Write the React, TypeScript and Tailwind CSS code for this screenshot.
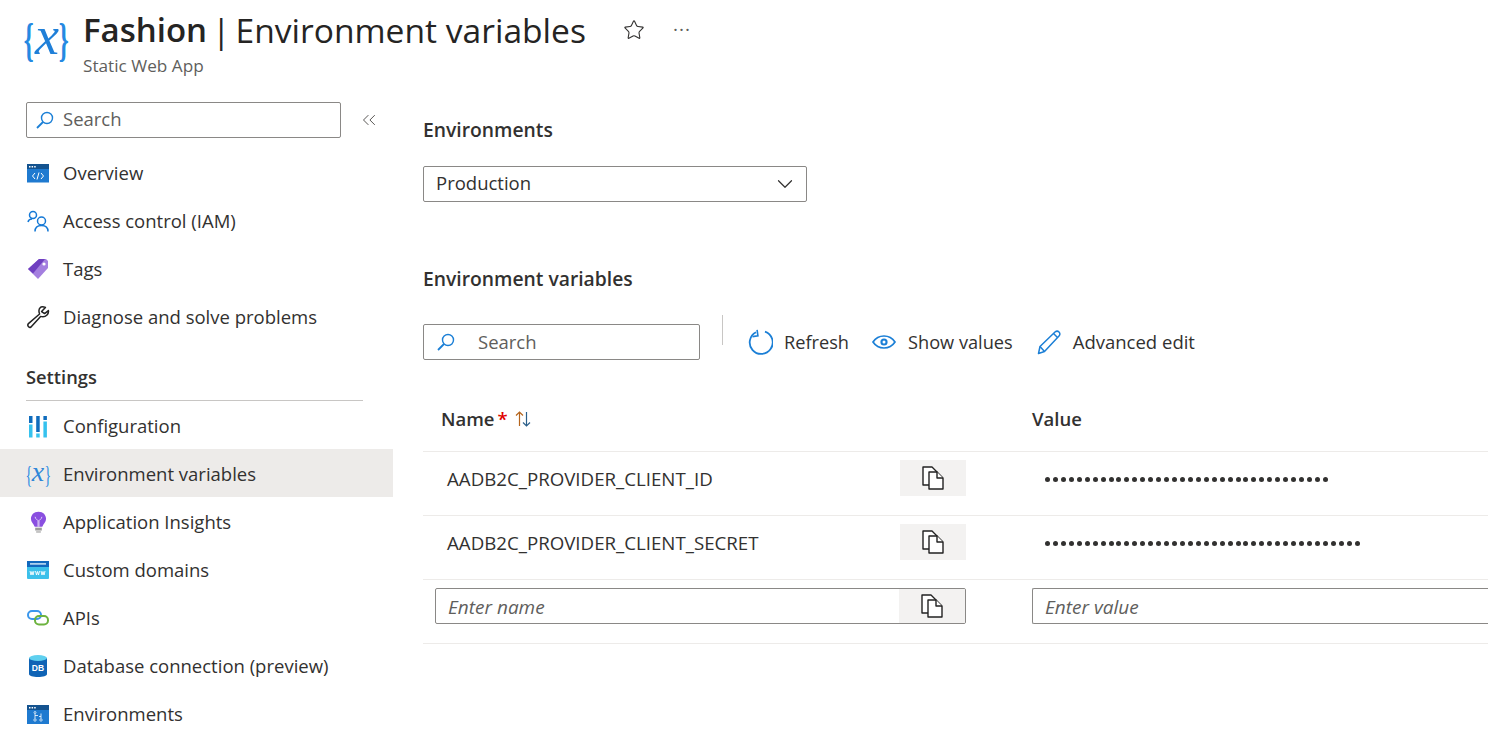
import { ChevronDown, ChevronsLeft, Star } from "lucide-react";

function SearchGlyph() {
  return (
    <svg width="20" height="20" viewBox="0 0 20 20" fill="none" stroke="#1b7fd6" strokeWidth="1.4">
      <circle cx="12" cy="8" r="5.5" />
      <path d="M8 12 L2 18" strokeWidth="1.8" />
    </svg>
  );
}

function CurlyX({ size }: { size: "lg" | "sm" }) {
  if (size === "lg") {
    return (
      <div className="flex h-[44px] w-[44px] items-center justify-between font-['Liberation_Serif',serif] text-[#2589e2] leading-none">
        <span className="w-[9px] scale-x-[0.55] text-[46px] font-bold">
          <span className="-ml-[6px] block">{"{"}</span>
        </span>
        <span className="-mt-[9px] text-[54px] italic text-[#1f7fd8]">x</span>
        <span className="w-[9px] scale-x-[0.55] text-[46px] font-bold">
          <span className="-ml-[6px] block">{"}"}</span>
        </span>
      </div>
    );
  }
  return (
    <div className="flex h-[24px] w-[24px] items-center justify-between font-['Liberation_Serif',serif] text-[#2589e2] leading-none">
      <span className="w-[5px] scale-x-[0.55] text-[25px]">
        <span className="-ml-[3px] block">{"{"}</span>
      </span>
      <span className="-mt-[5px] text-[28px] italic text-[#2f86d8]">x</span>
      <span className="w-[5px] scale-x-[0.55] text-[25px]">
        <span className="-ml-[3px] block">{"}"}</span>
      </span>
    </div>
  );
}

function OverviewIcon() {
  return (
    <svg width="22" height="19" viewBox="0 0 22 19">
      <rect x="0" y="0" width="22" height="18.5" fill="#1f7ad0" />
      <rect x="0" y="0" width="22" height="5" fill="#14538f" />
      <rect x="2" y="2" width="1.5" height="1.5" fill="#fff" />
      <rect x="4.6" y="2" width="1.5" height="1.5" fill="#fff" />
      <rect x="7.2" y="2" width="1.5" height="1.5" fill="#fff" />
      <path d="M8 9 L5.5 12 L8 15 M14 9 L16.5 12 L14 15 M12 8.5 L10 15.5" stroke="#fff" strokeWidth="1" fill="none" />
    </svg>
  );
}

function AccessIcon() {
  return (
    <svg width="22" height="22" viewBox="0 0 22 22" fill="none" stroke="#1579d6" strokeWidth="1.5">
      <circle cx="6" cy="5" r="3.5" />
      <circle cx="14.5" cy="11" r="4" />
      <path d="M1 12 C1.5 9.8 3 9 5 9 M8 21.5 C8 17 11 15.5 14.5 15.5 C18 15.5 21 17 21 21.5" />
    </svg>
  );
}

function TagIcon() {
  return (
    <svg width="22" height="22" viewBox="0 0 22 22">
      <path d="M1 11 L12 1 H19 L21 3 V10 L11 21 Z" fill="#a47fdf" />
      <path d="M1 11 L12 1 H18 L6 15.5 Z" fill="#6f3fc0" />
      <circle cx="17" cy="6" r="1.6" fill="#fff" />
    </svg>
  );
}

function WrenchIcon() {
  return (
    <svg width="24" height="24" viewBox="0 0 24 24" fill="none" stroke="#222" strokeWidth="1.5" strokeLinejoin="round">
      <path d="M15 2 L13.5 3.5 C12.6 5.5 13 7.6 13.6 9 L2.4 18.6 C1 20 2.6 23.4 5 22 L14.6 11.4 C16.4 12 19 12 21 10 C22.4 8.6 22.6 6.8 22.4 5.6 L18.6 8.6 L15.6 6.6 L19.4 2.4 C18 1.8 16.4 1.4 15 2 Z" />
    </svg>
  );
}

function ConfigIcon() {
  return (
    <svg width="18" height="23" viewBox="0 0 18 23">
      <rect x="0" y="1" width="3.5" height="7" fill="#0f6cbd" />
      <rect x="0" y="9.5" width="3.5" height="13" fill="#36c2ee" />
      <rect x="7.2" y="1" width="3.5" height="16" fill="#0f6cbd" />
      <rect x="7.2" y="18.5" width="3.5" height="4" fill="#36c2ee" />
      <rect x="14.4" y="1" width="3.5" height="4" fill="#0f6cbd" />
      <rect x="14.4" y="6.5" width="3.5" height="16" fill="#36c2ee" />
    </svg>
  );
}

function BulbIcon() {
  return (
    <svg width="17" height="23" viewBox="0 0 18 23">
      <path d="M9 0 C4 0 1 3.5 1 7.5 C1 11 3.5 12.5 5 16 H13 C14.5 12.5 17 11 17 7.5 C17 3.5 14 0 9 0 Z" fill="#8a4fe0" />
      <path d="M5.5 5.5 C5.5 8.5 8 8 8.5 9.5 V16 M12.5 5.5 C12.5 8.5 10 8 9.5 9.5 V16" stroke="#e2d5f7" strokeWidth="1" fill="none" />
      <rect x="5.5" y="17" width="7" height="3" fill="#9b9b9b" />
      <rect x="6.5" y="20.5" width="5" height="2" fill="#c4c4c4" />
    </svg>
  );
}

function DomainIcon() {
  return (
    <svg width="22" height="18" viewBox="0 0 22 18">
      <rect x="0" y="0" width="22" height="18" rx="1" fill="#3cc0ea" />
      <rect x="0" y="0" width="22" height="6" fill="#1268bd" />
      <rect x="3" y="2.2" width="16" height="1.4" fill="#d6ecfa" />
      <path d="M3 10 L4 14 L5 10.5 L6 14 L7 10 M8.5 10 L9.5 14 L10.5 10.5 L11.5 14 L12.5 10 M14 10 L15 14 L16 10.5 L17 14 L18 10" stroke="#fff" strokeWidth="0.9" fill="none" />
    </svg>
  );
}

function ApiIcon() {
  return (
    <svg width="22" height="16" viewBox="0 0 22 16" fill="none" strokeWidth="2">
      <rect x="1" y="1" width="13" height="8" rx="4" stroke="#3b97ec" />
      <rect x="8" y="6" width="13" height="8.5" rx="4" stroke="#6db33f" />
    </svg>
  );
}

function DbIcon() {
  return (
    <svg width="18" height="22" viewBox="0 0 18 22">
      <path d="M0 3 V19 C0 21 4 22 9 22 C14 22 18 21 18 19 V3 Z" fill="#0f63b5" />
      <ellipse cx="9" cy="3" rx="9" ry="3" fill="#5fd0ef" />
      <text x="9" y="16" textAnchor="middle" fontSize="8.5" fontWeight="700" fontFamily="Liberation Sans, sans-serif" fill="#fff">DB</text>
    </svg>
  );
}

function EnvsIcon() {
  return (
    <svg width="22" height="19" viewBox="0 0 22 19">
      <rect x="0" y="0" width="22" height="19" fill="#1f7ad0" />
      <rect x="0" y="0" width="22" height="5" fill="#14538f" />
      <rect x="2" y="2" width="1.5" height="1.5" fill="#fff" />
      <rect x="4.6" y="2" width="1.5" height="1.5" fill="#fff" />
      <rect x="7.2" y="2" width="1.5" height="1.5" fill="#fff" />
      <path d="M8 8.5 V13.5 M14 8.5 V13.5 M8 10.5 H11 M14 11.5 H12" stroke="#fff" strokeWidth="0.8" fill="none" />
      <circle cx="8" cy="7.5" r="1" fill="none" stroke="#fff" strokeWidth="0.7" />
      <circle cx="8" cy="15" r="1.2" fill="none" stroke="#fff" strokeWidth="0.7" />
      <circle cx="14" cy="15" r="1.2" fill="none" stroke="#fff" strokeWidth="0.7" />
    </svg>
  );
}

function RefreshGlyph() {
  return (
    <svg width="26" height="26" viewBox="0 0 26 26" fill="none" stroke="#1b7fd6" strokeWidth="1.8">
      <path d="M9 3.2 A11.5 11.5 0 1 0 18 2.6" />
      <path d="M10.5 1 V7 H5" strokeWidth="1.6" transform="rotate(-8 10 4)" />
    </svg>
  );
}

function EyeGlyph() {
  return (
    <svg width="24" height="14" viewBox="0 0 24 14" fill="none" stroke="#1b7fd6" strokeWidth="1.7">
      <path d="M1 7 C4 2.5 8 1 12 1 C16 1 20 2.5 23 7 C20 11.5 16 13 12 13 C8 13 4 11.5 1 7 Z" />
      <circle cx="12" cy="7" r="3.6" fill="#1b7fd6" stroke="none" />
      <circle cx="12" cy="7" r="1.5" fill="#fff" stroke="none" />
    </svg>
  );
}

function PencilGlyph() {
  return (
    <svg width="24" height="25" viewBox="0 0 24 25" fill="none" stroke="#1b7fd6" strokeWidth="1.5" strokeLinejoin="round">
      <path d="M1.5 23.5 L3 16.5 L18 2 C19.5 0.8 21 1 22 2 C23.2 3.2 23.2 4.8 22 6 L7.5 21.5 Z" />
      <path d="M3 16.5 L7.5 21.5 M16.5 3.5 L20.5 7.5" />
    </svg>
  );
}

function CopyGlyph() {
  return (
    <svg width="22" height="24" viewBox="0 0 22 24" fill="#fff" stroke="#222" strokeWidth="1.4" strokeLinejoin="round">
      <path d="M1 1 H10 L15 6 V19 H1 Z" />
      <path d="M7 6 H15 L21 12 V23 H7 Z" />
      <path d="M15 6 V12 H21" />
    </svg>
  );
}

function SortGlyph() {
  return (
    <svg width="16" height="18" viewBox="0 0 16 18" fill="none" strokeWidth="1.2">
      <path d="M4.5 16 V2 M1 5.5 L4.5 2 L8 5.5" stroke="#b5651d" />
      <path d="M11.5 2 V16 M8 12.5 L11.5 16 L15 12.5" stroke="#2b5f8a" />
    </svg>
  );
}

const navTop = [
  { label: "Overview", icon: <OverviewIcon /> },
  { label: "Access control (IAM)", icon: <AccessIcon /> },
  { label: "Tags", icon: <TagIcon /> },
  { label: "Diagnose and solve problems", icon: <WrenchIcon /> },
];

const navSettings = [
  { label: "Configuration", icon: <ConfigIcon /> },
  { label: "Environment variables", icon: <CurlyX size="sm" />, active: true },
  { label: "Application Insights", icon: <BulbIcon /> },
  { label: "Custom domains", icon: <DomainIcon /> },
  { label: "APIs", icon: <ApiIcon /> },
  { label: "Database connection (preview)", icon: <DbIcon /> },
  { label: "Environments", icon: <EnvsIcon /> },
];

function NavRow({ label, icon, active, low }: { label: string; icon: React.ReactNode; active?: boolean; low?: boolean }) {
  return (
    <div className={`flex h-12 shrink-0 items-center pl-[26px] ${active ? "bg-[#edebe9]" : ""}`}>
      <div className={`flex w-[24px] justify-center ${low ? "pt-[2px]" : ""}`}>{icon}</div>
      <span className={`ml-[13px] whitespace-nowrap ${low ? "pt-[2px]" : ""}`}>{label}</span>
    </div>
  );
}

const rows = [
  { name: "AADB2C_PROVIDER_CLIENT_ID", dots: 36 },
  { name: "AADB2C_PROVIDER_CLIENT_SECRET", dots: 40 },
];

export default function App() {
  return (
    <div className="flex h-[730px] w-[1488px] flex-col overflow-hidden bg-white font-['Open_Sans',sans-serif] text-[18.5px] text-[#323130]">
      {/* header */}
      <div className="flex h-[97px] shrink-0 items-start pl-[25px] pt-[11px]">
        <div className="mt-[7px]"><CurlyX size="lg" /></div>
        <div className="ml-[14px]">
          <div className="flex items-center text-[33.6px] leading-[38px] text-[#252423]">
            <span className="text-[33px] font-semibold">Fashion</span>
            <span className="mx-[5px] font-normal">|</span>
            <span>Environment variables</span>
            <Star className="ml-[37px] h-[22px] w-[22px] text-[#323130]" strokeWidth={1.2} />
            <span className="ml-[28px] -mt-[2px] text-[19px] tracking-[1px] text-[#605e5c]">···</span>
          </div>
          <div className="mt-[7px] text-[17.2px] leading-5 text-[#605e5c]">Static Web App</div>
        </div>
      </div>

      <div className="flex min-h-0 flex-1">
        {/* sidebar */}
        <div className="flex w-[393px] shrink-0 flex-col overflow-hidden pt-[5px]">
          <div className="flex shrink-0 items-center pl-[26px]">
            <div className="flex h-9 w-[315px] items-center rounded-[2px] border border-[#8a8886] pl-[8px] text-[#605e5c]">
              <SearchGlyph />
              <span className="ml-[8px] -mt-[2px]">Search</span>
            </div>
            <ChevronsLeft className="ml-[17px] h-[22px] w-[22px] text-[#484644]" strokeWidth={1} />
          </div>
          <div className="mt-[11px] flex flex-col">
            {navTop.map((n) => <NavRow key={n.label} {...n} />)}
          </div>
          <div className="ml-[26px] mr-[30px] mt-[24px] h-[36px] shrink-0 border-b border-[#c8c6c4] font-semibold leading-[24px]">
            <span className="text-[18.3px]">Settings</span>
          </div>
          <div className="flex flex-col">
            {navSettings.map((n) => <NavRow key={n.label} {...n} low />)}
          </div>
        </div>

        {/* main */}
        <div className="min-w-0 flex-1 pl-[30px]">
          <div className="mt-[20px] text-[19.3px] font-semibold leading-[26px]">Environments</div>
          <div className="mt-[23px] flex h-9 w-[384px] items-center justify-between rounded-[2px] border border-[#8a8886] pl-[12px] pr-[8px]">
            <span className="-mt-[2px]">Production</span>
            <ChevronDown className="h-[26px] w-[26px] text-[#323130]" strokeWidth={1.1} />
          </div>
          <div className="mt-[64px] text-[19.3px] font-semibold leading-[26px]">Environment variables</div>

          <div className="mt-[23px] flex items-start">
            <div className="mt-[9px] flex h-9 w-[277px] items-center rounded-[2px] border border-[#8a8886] pl-[12px] text-[#605e5c]">
              <SearchGlyph />
              <span className="ml-[22px]">Search</span>
            </div>
            <div className="ml-[22px] h-[30px] w-[1px] bg-[#c8c6c4]"></div>
            <div className="ml-[24px] mt-[14px] flex items-center">
              <RefreshGlyph />
              <span className="ml-[11px] text-[18.2px] leading-[24px]">Refresh</span>
              <span className="ml-[23px]"><EyeGlyph /></span>
              <span className="ml-[12px] text-[18.2px] leading-[24px]">Show values</span>
              <span className="ml-[24px]"><PencilGlyph /></span>
              <span className="ml-[12px] leading-[24px]">Advanced edit</span>
            </div>
          </div>

          {/* table */}
          <div className="mt-[28px]">
            <div className="flex h-[64px] items-center border-b border-[#edebe9] pb-[2px]">
              <div className="flex w-[609px] items-center pl-[18px]">
                <span className="font-semibold">Name</span>
                <span className="ml-[3px] font-semibold text-[#e00000]">*</span>
                <span className="ml-[7px]"><SortGlyph /></span>
              </div>
              <span className="font-semibold">Value</span>
            </div>
            {rows.map((r) => (
              <div key={r.name} className="flex h-[64px] items-start border-b border-[#edebe9] pt-[8px]">
                <div className="flex h-9 w-[477px] items-center whitespace-nowrap pl-[24px] pt-[2px] text-[18.7px]">{r.name}</div>
                <div className="flex h-9 w-[66px] items-center justify-center bg-[#f3f2f1]"><CopyGlyph /></div>
                <div className="ml-[79px] flex h-9 items-center gap-[2.95px] pt-[2px]">
                  {Array.from({ length: r.dots }).map((_, i) => (
                    <span key={i} className="h-[5px] w-[5px] rounded-full bg-[#323130]"></span>
                  ))}
                </div>
              </div>
            ))}
            <div className="flex h-[64px] items-start border-b border-[#edebe9] pt-[8px] text-[19px]">
              <div className="ml-[12px] flex h-9 w-[531px] items-center overflow-hidden rounded-[2px] border border-[#8a8886]">
                <span className="flex-1 pl-[12px] pt-[2px] italic text-[#605e5c]">Enter name</span>
                <div className="flex h-full w-[66px] items-center justify-center bg-[#f3f2f1]"><CopyGlyph /></div>
              </div>
              <div className="ml-[66px] flex h-9 flex-1 items-center rounded-l-[2px] border border-r-0 border-[#8a8886] pl-[12px] pt-[2px] italic text-[#605e5c]">
                Enter value
              </div>
            </div>
          </div>
        </div>
      </div>
    </div>
  );
}
